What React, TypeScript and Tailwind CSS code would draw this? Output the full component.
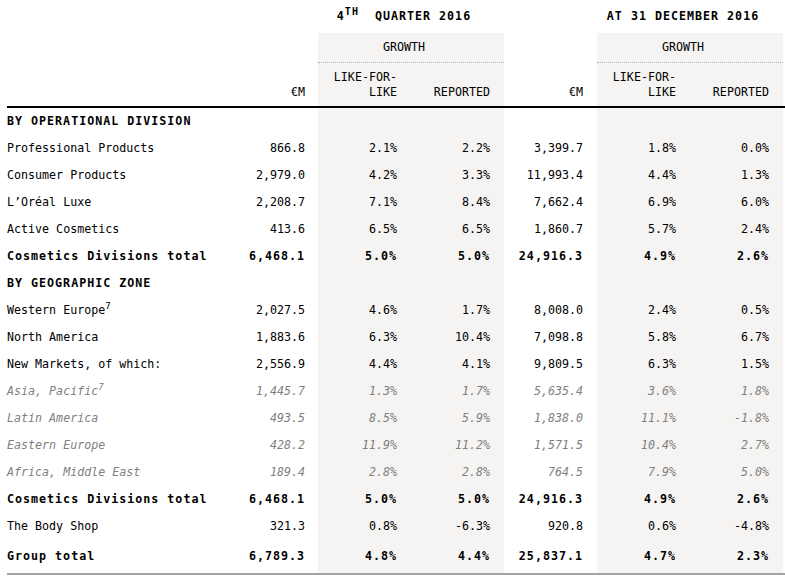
type Kind = 'section' | 'normal' | 'bold' | 'italic';

type Row = {
  label: string;
  sup?: string;
  kind: Kind;
  vals?: string[];
};

const rows: Row[] = [
  { label: 'BY OPERATIONAL DIVISION', kind: 'section' },
  { label: 'Professional Products', kind: 'normal', vals: ['866.8', '2.1%', '2.2%', '3,399.7', '1.8%', '0.0%'] },
  { label: 'Consumer Products', kind: 'normal', vals: ['2,979.0', '4.2%', '3.3%', '11,993.4', '4.4%', '1.3%'] },
  { label: 'L\u2019Or\u00e9al Luxe', kind: 'normal', vals: ['2,208.7', '7.1%', '8.4%', '7,662.4', '6.9%', '6.0%'] },
  { label: 'Active Cosmetics', kind: 'normal', vals: ['413.6', '6.5%', '6.5%', '1,860.7', '5.7%', '2.4%'] },
  { label: 'Cosmetics Divisions total', kind: 'bold', vals: ['6,468.1', '5.0%', '5.0%', '24,916.3', '4.9%', '2.6%'] },
  { label: 'BY GEOGRAPHIC ZONE', kind: 'section' },
  { label: 'Western Europe', sup: '7', kind: 'normal', vals: ['2,027.5', '4.6%', '1.7%', '8,008.0', '2.4%', '0.5%'] },
  { label: 'North America', kind: 'normal', vals: ['1,883.6', '6.3%', '10.4%', '7,098.8', '5.8%', '6.7%'] },
  { label: 'New Markets, of which:', kind: 'normal', vals: ['2,556.9', '4.4%', '4.1%', '9,809.5', '6.3%', '1.5%'] },
  { label: 'Asia, Pacific', sup: '7', kind: 'italic', vals: ['1,445.7', '1.3%', '1.7%', '5,635.4', '3.6%', '1.8%'] },
  { label: 'Latin America', kind: 'italic', vals: ['493.5', '8.5%', '5.9%', '1,838.0', '11.1%', '-1.8%'] },
  { label: 'Eastern Europe', kind: 'italic', vals: ['428.2', '11.9%', '11.2%', '1,571.5', '10.4%', '2.7%'] },
  { label: 'Africa, Middle East', kind: 'italic', vals: ['189.4', '2.8%', '2.8%', '764.5', '7.9%', '5.0%'] },
  { label: 'Cosmetics Divisions total', kind: 'bold', vals: ['6,468.1', '5.0%', '5.0%', '24,916.3', '4.9%', '2.6%'] },
  { label: 'The Body Shop', kind: 'normal', vals: ['321.3', '0.8%', '-6.3%', '920.8', '0.6%', '-4.8%'] },
  { label: 'Group total', kind: 'bold', vals: ['6,789.3', '4.8%', '4.4%', '25,837.1', '4.7%', '2.3%'] },
];

const grid = 'grid grid-cols-[218px_93px_93px_93px_93px_93px_93px]';
const shaded = [false, true, true, false, true, true];

function kindClass(kind: Kind) {
  if (kind === 'bold' || kind === 'section') return 'font-bold tracking-[1px] text-black';
  if (kind === 'italic') return 'italic text-[#808080]';
  return 'text-black';
}

export default function App() {
  return (
    <div className="w-[785px] h-[578px] bg-white pl-[7px] font-['DejaVu_Sans_Mono',monospace] text-[11.67px] leading-[15px] text-black">
      {/* Header */}
      <div className="border-b-2 border-black">
        <div className={`${grid} h-[33px] items-center`}>
          <div className="col-span-2" />
          <div className="col-span-2 pr-[14px] text-center font-bold tracking-[1px] whitespace-nowrap">
            4<span className="relative -top-[5px] text-[10px]">TH</span>&nbsp; QUARTER 2016
          </div>
          <div />
          <div className="col-span-2 pr-[14px] text-center font-bold tracking-[1px]">AT 31 DECEMBER 2016</div>
        </div>
        <div className={`${grid} h-[30px]`}>
          <div className="col-span-2" />
          <div className="col-span-2 bg-[#f5f4f2] border-b border-dotted border-[#b0b0b0] pr-[14px] flex items-center justify-center">
            GROWTH
          </div>
          <div />
          <div className="col-span-2 bg-[#f5f4f2] border-b border-dotted border-[#b0b0b0] pr-[14px] flex items-center justify-center">
            GROWTH
          </div>
        </div>
        <div className={`${grid} h-[43px]`}>
          <div />
          <div className="flex items-end justify-end pr-[13px] pb-[6px]">€M</div>
          <div className="bg-[#f5f4f2] flex flex-col items-end justify-end pr-[14px] pb-[6px]">
            <span>LIKE-FOR-</span>
            <span>LIKE</span>
          </div>
          <div className="bg-[#f5f4f2] flex items-end justify-end pr-[14px] pb-[6px]">REPORTED</div>
          <div className="flex items-end justify-end pr-[14px] pb-[6px]">€M</div>
          <div className="bg-[#f5f4f2] flex flex-col items-end justify-end pr-[14px] pb-[6px]">
            <span>LIKE-FOR-</span>
            <span>LIKE</span>
          </div>
          <div className="bg-[#f5f4f2] flex items-end justify-end pr-[14px] pb-[6px]">REPORTED</div>
        </div>
      </div>

      {/* Body */}
      <div className="border-b-2 border-[#a3a3a3]">
        {rows.map((row, i) => {
          const last = i === rows.length - 1;
          return (
            <div key={i} className={`${grid} ${last ? 'h-[33px]' : 'h-[27px]'} ${kindClass(row.kind)}`}>
              <div className="flex items-center whitespace-nowrap">
                <span>
                  {row.label}
                  {row.sup && <span className="relative -top-[5px] text-[9px]">{row.sup}</span>}
                </span>
              </div>
              {shaded.map((g, j) => (
                <div
                  key={j}
                  className={`flex items-center justify-end ${j === 0 ? 'pr-[13px]' : 'pr-[14px]'} ${g ? 'bg-[#f5f4f2]' : ''}`}
                >
                  {row.vals ? row.vals[j] : ''}
                </div>
              ))}
            </div>
          );
        })}
      </div>
    </div>
  );
}
